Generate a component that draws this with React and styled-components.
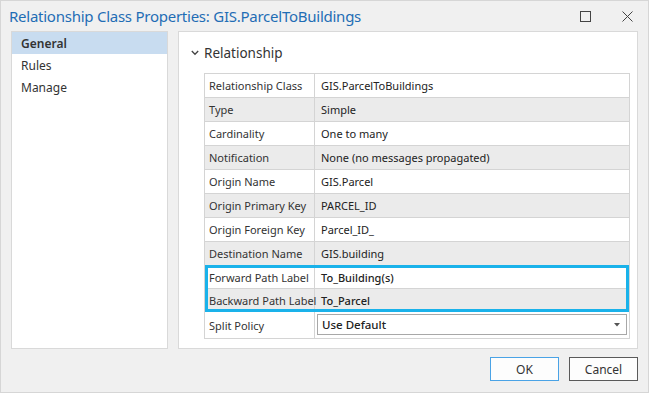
import styled, { createGlobalStyle } from "styled-components";

const GlobalStyle = createGlobalStyle`
  body {
    margin: 0;
    background: #f0f0f0;
    font-family: "Noto Sans", "Open Sans", sans-serif;
  }
`;

const Window = styled.div`
  width: 649px;
  height: 393px;
  box-sizing: border-box;
  border: 1px solid #d6d6d6;
  background: #f0f0f0;
  display: flex;
  flex-direction: column;
`;

const TitleBar = styled.div`
  height: 30px;
  display: flex;
  align-items: center;
  padding-left: 8px;
`;

const Title = styled.div`
  flex: 1;
  font-size: 15px;
  color: #1f6db5;
  letter-spacing: -0.25px;
`;

const WinButton = styled.div`
  width: 42px;
  height: 30px;
  display: flex;
  align-items: center;
  justify-content: center;
  color: #444;
`;

const Body = styled.div`
  display: flex;
  gap: 10px;
  padding: 0 10px 0 10px;
  height: 318px;
`;

const Nav = styled.div`
  width: 157px;
  box-sizing: border-box;
  border: 1px solid #d9d9d9;
  background: #fff;
  display: flex;
  flex-direction: column;
`;

const NavItem = styled.div`
  height: 22px;
  display: flex;
  align-items: center;
  padding-left: 9px;
  font-size: 12px;
  color: #333;
  font-weight: ${(p) => (p.$active ? 600 : 400)};
  background: ${(p) => (p.$active ? "#c8dcf0" : "transparent")};
`;

const Panel = styled.div`
  flex: 1;
  box-sizing: border-box;
  border: 1px solid #d9d9d9;
  background: #fff;
  padding: 11px 7px 0 25px;
`;

const SectionHeader = styled.div`
  display: flex;
  align-items: center;
  gap: 5px;
  margin-left: -13px;
  height: 20px;
  font-size: 13.5px;
  color: #333;
  margin-bottom: 10px;
`;

const Table = styled.div`
  border: 1px solid #d4d4d4;
  display: flex;
  flex-direction: column;
`;

const Row = styled.div`
  display: grid;
  grid-template-columns: 110px 1fr;
  height: ${(p) => p.$h || 24}px;
  box-sizing: border-box;
  background: ${(p) => (p.$alt ? "#ebebeb" : "#fff")};
  border-bottom: ${(p) => (p.$last ? "none" : "1px solid #d4d4d4")};
`;

const Highlight = styled.div`
  position: relative;
  display: flex;
  flex-direction: column;
  &::after {
    content: "";
    position: absolute;
    inset: -1px 0 0 0;
    border: 3px solid #1ab2ea;
    pointer-events: none;
  }
`;

const Label = styled.div`
  display: flex;
  align-items: center;
  padding-left: 4px;
  font-size: 11px;
  color: #333;
  border-right: 1px solid #d4d4d4;
  white-space: nowrap;
`;

const Value = styled.div`
  display: flex;
  align-items: center;
  padding-left: 6px;
  font-size: 11px;
  color: #222;
  font-weight: ${(p) => (p.$bold ? 500 : 400)};
`;

const ComboCell = styled.div`
  display: flex;
  padding: 2px 2px 3px 2px;
`;

const Combo = styled.div`
  flex: 1;
  border: 1px solid #a8a8a8;
  display: flex;
  align-items: center;
  justify-content: space-between;
  padding: 0 6px 0 4px;
  font-size: 11.5px;
  font-weight: 500;
  color: #222;
`;

const Footer = styled.div`
  display: flex;
  justify-content: flex-end;
  gap: 10px;
  padding: 8px 10px 0 0;
`;

const Button = styled.button`
  width: 69px;
  height: 24px;
  box-sizing: border-box;
  background: #fdfdfd;
  border: 1px solid ${(p) => (p.$primary ? "#4aa3e6" : "#5a5a5a")};
  font-family: inherit;
  font-size: 12px;
  color: #333;
  padding: 0;
`;

const rows = [
  ["Relationship Class", "GIS.ParcelToBuildings"],
  ["Type", "Simple"],
  ["Cardinality", "One to many"],
  ["Notification", "None (no messages propagated)"],
  ["Origin Name", "GIS.Parcel"],
  ["Origin Primary Key", "PARCEL_ID"],
  ["Origin Foreign Key", "Parcel_ID_"],
  ["Destination Name", "GIS.building"],
];

export default function App() {
  return (
    <Window>
      <GlobalStyle />
      <TitleBar>
        <Title>Relationship Class Properties: GIS.ParcelToBuildings</Title>
        <WinButton>
          <svg width="11" height="11" viewBox="0 0 11 11">
            <rect x="0.5" y="0.5" width="10" height="10" fill="none" stroke="#444" />
          </svg>
        </WinButton>
        <WinButton>
          <svg width="11" height="11" viewBox="0 0 11 11">
            <path d="M0.5 0.5 L10.5 10.5 M10.5 0.5 L0.5 10.5" stroke="#444" strokeWidth="1" />
          </svg>
        </WinButton>
      </TitleBar>
      <Body>
        <Nav>
          <NavItem $active>General</NavItem>
          <NavItem>Rules</NavItem>
          <NavItem>Manage</NavItem>
        </Nav>
        <Panel>
          <SectionHeader>
            <svg width="8" height="6" viewBox="0 0 8 6">
              <path d="M0.8 1 L4 4.3 L7.2 1" fill="none" stroke="#444" strokeWidth="1.3" />
            </svg>
            Relationship
          </SectionHeader>
          <Table>
            {rows.map(([k, v], i) => (
              <Row key={k} $alt={i % 2 === 1}>
                <Label>{k}</Label>
                <Value>{v}</Value>
              </Row>
            ))}
            <Highlight>
              <Row $h={23}>
                <Label>Forward Path Label</Label>
                <Value $bold>To_Building(s)</Value>
              </Row>
              <Row $h={23} $alt>
                <Label>Backward Path Label</Label>
                <Value $bold>To_Parcel</Value>
              </Row>
            </Highlight>
            <Row $h={26} $last>
              <Label>Split Policy</Label>
              <ComboCell>
                <Combo>
                  Use Default
                  <svg width="6" height="4" viewBox="0 0 6 4">
                    <path d="M0 0 L6 0 L3 3.5 Z" fill="#555" />
                  </svg>
                </Combo>
              </ComboCell>
            </Row>
          </Table>
        </Panel>
      </Body>
      <Footer>
        <Button $primary>OK</Button>
        <Button>Cancel</Button>
      </Footer>
    </Window>
  );
}
